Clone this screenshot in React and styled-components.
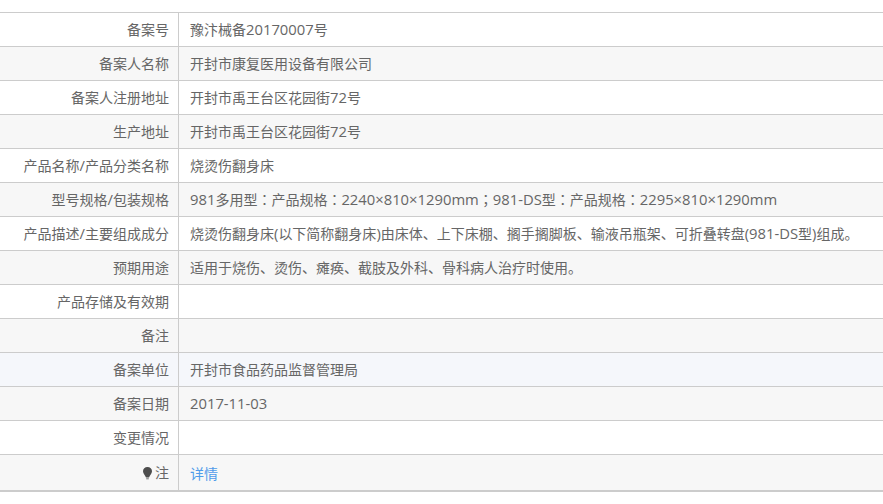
import React from "react";
import styled, { createGlobalStyle } from "styled-components";

const Global = createGlobalStyle`
  html, body { margin: 0; padding: 0; background: #fff; }
  body { font-family: "Open Sans", "Noto Sans CJK SC", sans-serif; overflow: hidden; }
`;

const Page = styled.div`
  padding-top: 12px;
  width: 883px;
`;

const Table = styled.div`
  border-top: 1px solid #ccc;
  border-bottom: 2px solid #ccc;
  display: flex;
  flex-direction: column;
`;

const Row = styled.div`
  display: grid;
  grid-template-columns: 179px 1fr;
  height: ${(p) => (p.$last ? 35 : 33)}px;
  line-height: 20px;
  font-size: 14px;
  color: #666;
  white-space: nowrap;
  background: ${(p) => p.$bg || "#fff"};
  & + & { border-top: 1px solid #ccc; }
`;

const Label = styled.div`
  padding: ${(p) => (p.$last ? 8 : 7)}px 9px 0 0;
  border-right: 1px solid #ccc;
  text-align: right;
`;

const Value = styled.div`
  padding: ${(p) => (p.$last ? 9 : 7)}px 0 0 11px;
`;

const Punct = styled.span`
  font-family: "Noto Sans CJK TC", sans-serif;
  line-height: 0;
`;

const Latin = styled.span`
  font-size: 14.8px;
  line-height: 0;
`;

const Link = styled.a`
  color: #4f9bea;
  text-decoration: none;
`;

const Bulb = styled.svg`
  width: 11px;
  height: 14px;
  margin-right: 2px;
  vertical-align: -2px;
`;

const rows = [
  ["备案号", "豫汴械备20170007号"],
  ["备案人名称", "开封市康复医用设备有限公司"],
  ["备案人注册地址", "开封市禹王台区花园街72号"],
  ["生产地址", "开封市禹王台区花园街72号"],
  ["产品名称/产品分类名称", "烧烫伤翻身床"],
  ["型号规格/包装规格", "981多用型：产品规格：2240×810×1290mm；981-DS型：产品规格：2295×810×1290mm"],
  ["产品描述/主要组成成分", "烧烫伤翻身床(以下简称翻身床)由床体、上下床棚、搁手搁脚板、输液吊瓶架、可折叠转盘(981-DS型)组成。"],
  ["预期用途", "适用于烧伤、烫伤、瘫痪、截肢及外科、骨科病人治疗时使用。"],
  ["产品存储及有效期", ""],
  ["备注", ""],
  ["备案单位", "开封市食品药品监督管理局"],
  ["备案日期", "2017-11-03"],
  ["变更情况", ""],
];

const bgFor = (i) => (i === 10 ? "#f5f7fb" : i % 2 === 1 ? "#f7f7f7" : "#fff");

const styledRuns = (text) =>
  text.split(/([：；]|[0-9A-Za-z×()/-]+)/).map((part, i) => {
    if (part === "：" || part === "；") return <Punct key={i}>{part}</Punct>;
    if (/^[0-9A-Za-z×()/-]+$/.test(part)) return <Latin key={i}>{part}</Latin>;
    return part;
  });

export default function App() {
  return (
    <Page>
      <Global />
      <Table>
        {rows.map(([k, v], i) => (
          <Row key={k} $bg={bgFor(i)}>
            <Label>{styledRuns(k)}</Label>
            <Value>{styledRuns(v)}</Value>
          </Row>
        ))}
        <Row $last $bg="#f7f7f7">
          <Label $last>
            <Bulb viewBox="0 0 11 14">
              <path d="M5.500 1C2.900 1 1 2.900 1 5.200c0 2.300 1.900 3.600 3 6.300h3c1.100-2.700 3-4 3-6.300C10 2.900 8.100 1 5.500 1z" fill="#4d4d4d" />
              <path d="M4.200 12h2.600v1.400H4.200z" fill="#999" />
            </Bulb>
            注
          </Label>
          <Value $last>
            <Link href="#">详情</Link>
          </Value>
        </Row>
      </Table>
    </Page>
  );
}
